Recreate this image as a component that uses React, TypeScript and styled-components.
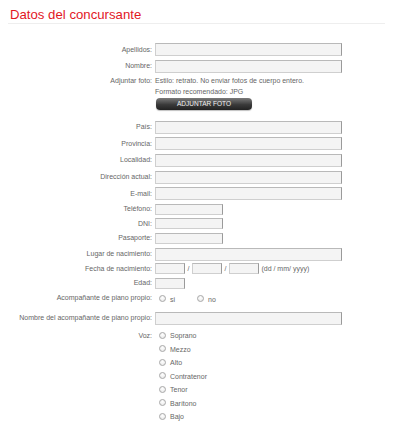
import React from "react";
import styled, { createGlobalStyle } from "styled-components";

const Global = createGlobalStyle`
  html, body { margin: 0; padding: 0; background: #ffffff; }
  body { font-family: "Liberation Sans", Arial, sans-serif; }
`;

const Page = styled.div`
  width: 400px;
  height: 434px;
  overflow: hidden;
  background: #fff;
`;

const Header = styled.h1`
  margin: 0 0 0 8px;
  width: 377px;
  box-sizing: border-box;
  padding: 7px 0 0 2px;
  height: 24px;
  border-bottom: 1px solid #eeeeee;
  font-family: "Liberation Sans", Arial, sans-serif;
  font-weight: normal;
  font-size: 13.2px;
  line-height: 15px;
  color: #e2161f;
`;

const Form = styled.div`
  display: flex;
  flex-direction: column;
  gap: 3.6px;
  margin-top: 19px;
`;

const Row = styled.div<{ $h?: number; $mt?: number; $top?: boolean }>`
  display: flex;
  align-items: ${(p) => (p.$top ? "flex-start" : "center")};
  gap: 3px;
  min-height: ${(p) => p.$h ?? 13}px;
  margin-top: ${(p) => p.$mt ?? 0}px;
`;

const Label = styled.div<{ $lh?: number }>`
  width: 152px;
  flex: none;
  text-align: right;
  font-size: 7px;
  line-height: ${(p) => p.$lh ?? 10}px;
  color: #666;
  white-space: nowrap;
`;

const Input = styled.div<{ $w: number; $h?: number }>`
  width: ${(p) => p.$w}px;
  height: ${(p) => p.$h ?? 13}px;
  box-sizing: border-box;
  background: #f4f4f4;
  border: 1px solid #cfcfcf;
  border-top-color: #b9b9b9;
  border-right-color: #9a9a9a;
  flex: none;
`;

const Stack = styled.div<{ $gap?: number }>`
  display: flex;
  flex-direction: column;
  gap: ${(p) => p.$gap ?? 0}px;
`;

const Note = styled.div`
  font-size: 7px;
  line-height: 10.5px;
  color: #666;
  white-space: nowrap;
`;

const Button = styled.div`
  width: 96px;
  height: 12px;
  margin: 1px 0 0 1px;
  border-radius: 4px;
  background: linear-gradient(#7a7a7a, #3a3a3a 55%, #222);
  box-shadow: 0 1px 1px rgba(0, 0, 0, 0.25);
  color: #f2f2f2;
  font-size: 6.5px;
  line-height: 12px;
  text-align: center;
`;

const Inline = styled.div`
  display: flex;
  align-items: center;
  gap: 2.5px;
  font-size: 7px;
  color: #666;
`;

const Slash = styled.span`
  font-size: 7px;
  color: #666;
`;

const Choices = styled.div<{ $gap?: number }>`
  display: flex;
  align-items: center;
  gap: ${(p) => p.$gap ?? 18}px;
`;

const RadioList = styled.div`
  display: flex;
  flex-direction: column;
`;

const Choice = styled.label<{ $h?: number }>`
  display: flex;
  align-items: center;
  gap: 4px;
  padding-left: 4px;
  height: ${(p) => p.$h ?? 13.5}px;
  font-size: 7px;
  color: #666;
`;

const Circle = styled.span`
  width: 7px;
  height: 7px;
  box-sizing: border-box;
  border-radius: 50%;
  border: 1px solid #a8a8a8;
  background: radial-gradient(circle at 50% 35%, #ffffff, #e4e4e4);
  flex: none;
`;

const ChoiceText = styled.span<{ $low?: boolean }>`
  position: relative;
  top: ${(p) => (p.$low ? 1.5 : 0.5)}px;
`;

const voices = ["Soprano", "Mezzo", "Alto", "Contratenor", "Tenor", "Barítono", "Bajo"];

export default function App() {
  return (
    <Page>
      <Global />
      <Header>Datos del concursante</Header>
      <Form>
        <Row>
          <Label>Apellidos:</Label>
          <Input $w={187} />
        </Row>
        <Row>
          <Label>Nombre:</Label>
          <Input $w={187} />
        </Row>
        <Row $top>
          <Label $lh={10.5}>Adjuntar foto:</Label>
          <Stack>
            <Note>Estilo: retrato. No enviar fotos de cuerpo entero.</Note>
            <Note>Formato recomendado: JPG</Note>
            <Button>ADJUNTAR FOTO</Button>
          </Stack>
        </Row>
        <Row $mt={7}>
          <Label>País:</Label>
          <Input $w={187} />
        </Row>
        <Row>
          <Label>Provincia:</Label>
          <Input $w={187} />
        </Row>
        <Row>
          <Label>Localidad:</Label>
          <Input $w={187} />
        </Row>
        <Row>
          <Label>Dirección actual:</Label>
          <Input $w={187} />
        </Row>
        <Row>
          <Label>E-mail:</Label>
          <Input $w={187} />
        </Row>
        <Row $h={11}>
          <Label>Teléfono:</Label>
          <Input $w={68} $h={11} />
        </Row>
        <Row $h={11}>
          <Label>DNI:</Label>
          <Input $w={68} $h={11} />
        </Row>
        <Row $h={11}>
          <Label>Pasaporte:</Label>
          <Input $w={68} $h={11} />
        </Row>
        <Row>
          <Label>Lugar de nacimiento:</Label>
          <Input $w={187} />
        </Row>
        <Row $h={11} $mt={-1}>
          <Label>Fecha de nacimiento:</Label>
          <Inline>
            <Input $w={30} $h={11} />
            <Slash>/</Slash>
            <Input $w={30} $h={11} />
            <Slash>/</Slash>
            <Input $w={30} $h={11} />
            <span>(dd / mm/ yyyy)</span>
          </Inline>
        </Row>
        <Row $h={11}>
          <Label>Edad:</Label>
          <Input $w={30} $h={11} />
        </Row>
        <Row $h={12}>
          <Label>Acompañante de piano propio:</Label>
          <Choices>
            <Choice $h={12}>
              <Circle />
              <ChoiceText $low>si</ChoiceText>
            </Choice>
            <Choice $h={12}>
              <Circle />
              <ChoiceText $low>no</ChoiceText>
            </Choice>
          </Choices>
        </Row>
        <Row $mt={4}>
          <Label>Nombre del acompañante de piano propio:</Label>
          <Input $w={187} />
        </Row>
        <Row $top>
          <Label $lh={13.5}>Voz:</Label>
          <RadioList>
            {voices.map((v) => (
              <Choice key={v}>
                <Circle />
                <ChoiceText>{v}</ChoiceText>
              </Choice>
            ))}
          </RadioList>
        </Row>
      </Form>
    </Page>
  );
}
